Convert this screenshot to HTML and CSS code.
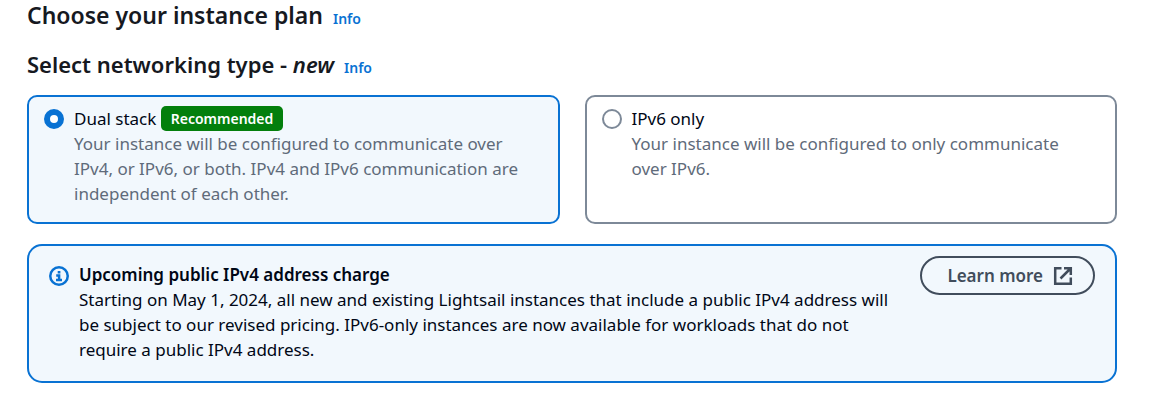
FILE: index.html
```html
<!DOCTYPE html>
<html lang="en">
<head>
<meta charset="utf-8">
<meta name="viewport" content="width=device-width, initial-scale=1">
<title>Choose your instance plan</title>
<link rel="stylesheet" href="styles.css">
</head>
<body>
<main class="page">
  <header class="heading">
    <h1 class="title">Choose your instance plan</h1>
    <a class="info" href="#plan-info">Info</a>
  </header>
  <section>
    <div class="heading heading-sub">
      <h2 class="subtitle" id="network-label">Select networking type - <em>new</em></h2>
      <a class="info" href="#network-info">Info</a>
    </div>
    <div class="tiles" role="radiogroup" aria-labelledby="network-label">
      <label class="tile">
        <input class="radio" type="radio" name="network" checked>
        <span class="tile-text">
          <span class="tile-label">Dual stack <span class="badge">Recommended</span></span>
          <span class="tile-description">Your instance will be configured to communicate over IPv4, or IPv6, or both. IPv4 and IPv6 communication are independent of each other.</span>
        </span>
      </label>
      <label class="tile">
        <input class="radio" type="radio" name="network">
        <span class="tile-text">
          <span class="tile-label">IPv6 only</span>
          <span class="tile-description">Your instance will be configured to only communicate over IPv6.</span>
        </span>
      </label>
    </div>
  </section>
  <section class="alert">
    <svg class="alert-icon" viewBox="0 0 20 20" aria-hidden="true">
      <circle cx="10" cy="10" r="8.75"/>
      <path d="M8.7 6.2h2.7M7.2 9.6h2.9v4.3M7 13.9h6"/>
    </svg>
    <div class="alert-text">
      <h3 class="alert-title">Upcoming public IPv4 address charge</h3>
      <p class="alert-body">Starting on May 1, 2024, all new and existing Lightsail instances that include a public IPv4 address will be subject to our revised pricing. IPv6-only instances are now available for workloads that do not require a public IPv4 address.</p>
    </div>
    <a class="button" href="#learn-more">Learn more
      <svg class="button-icon" viewBox="0 0 20 20" aria-hidden="true">
        <path d="M8.5 2.2H2.2v15.6h15.6v-6.3M11 2.2h6.8V9M17.5 2.5L7.5 12.5"/>
      </svg>
    </a>
  </section>
</main>
</body>
</html>
```
FILE: styles.css
```css
* {
  box-sizing: border-box;
}

body {
  margin: 0;
  background: #fff;
  color: #000716;
  font-family: "Noto Sans", "Open Sans", sans-serif;
  font-size: 17px;
  line-height: 25px;
}

h1, h2, h3, p {
  margin: 0;
}

.page {
  padding: 1px 35px 26px 27px;
}

.heading {
  display: flex;
  align-items: baseline;
  gap: 10px;
  line-height: 28px;
}

.heading-sub {
  margin: 17px 0 13px;
}

.title,
.subtitle {
  color: #16191f;
  font-size: 23px;
  font-weight: 600;
}

.subtitle {
  font-size: 22px;
}

.info {
  color: #0972d3;
  font-size: 14px;
  font-weight: 600;
  text-decoration: none;
}

.tiles {
  display: grid;
  grid-template-columns: 1fr 1fr;
  gap: 25px;
}

.tile {
  display: flex;
  gap: 10px;
  padding: 9px 20px 16px 15px;
  border: 2px solid #7d8998;
  border-radius: 10px;
}

.tile:has(:checked) {
  border-color: #0972d3;
  background: #f2f8fd;
}

.radio {
  appearance: none;
  flex: none;
  width: 20px;
  height: 20px;
  margin: 3px 0 0;
  border: 2px solid #7d8998;
  border-radius: 50%;
  background: #fff;
}

.radio:checked {
  border: 6px solid #0972d3;
}

.tile-label,
.tile-description {
  display: block;
}

.tile-description {
  color: #5f6b7a;
}

.badge {
  display: inline-block;
  padding: 0 10px;
  border-radius: 5px;
  background: #037f0c;
  color: #fff;
  font-size: 14px;
  font-weight: 600;
  vertical-align: top;
}

.alert {
  display: flex;
  align-items: flex-start;
  gap: 10px;
  margin-top: 20px;
  padding: 10px 20px 19px;
  border: 2px solid #0972d3;
  border-radius: 15px;
  background: #f2f8fd;
}

.alert-icon {
  flex: none;
  width: 20px;
  height: 20px;
  margin-top: 10px;
  fill: none;
  stroke: #0972d3;
  stroke-width: 2.5;
}

.alert-text {
  flex: 1;
  padding-top: 6px;
}

.alert-title {
  font-size: 17px;
  font-weight: 600;
}

.button {
  display: flex;
  flex: none;
  align-items: center;
  gap: 10px;
  margin-left: 10px;
  padding: 5px 20px 5px 25px;
  border: 2px solid #414d5c;
  border-radius: 20px;
  color: #414d5c;
  font-weight: 600;
  text-decoration: none;
}

.button-icon {
  width: 20px;
  height: 20px;
  fill: none;
  stroke: #414d5c;
  stroke-width: 2.5;
}
```
